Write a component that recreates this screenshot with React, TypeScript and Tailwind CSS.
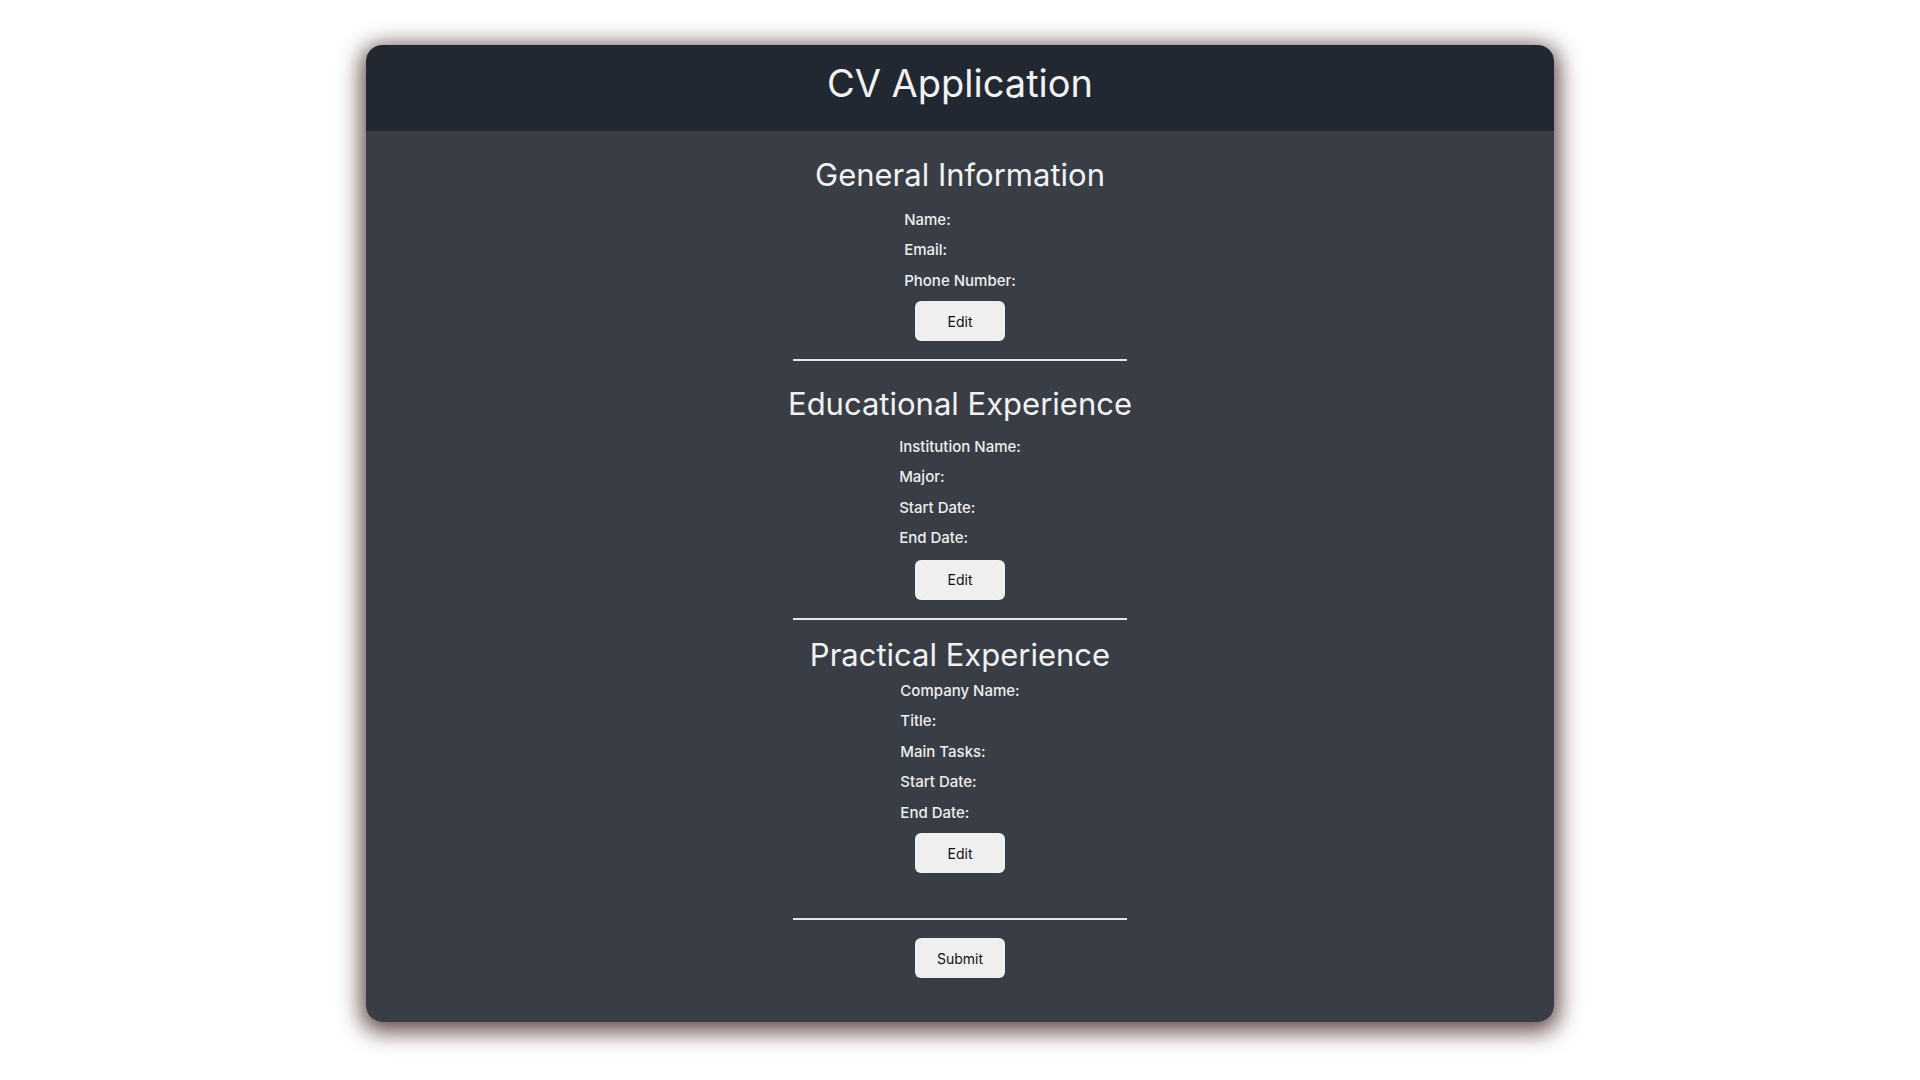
import React from "react";

type Field = { label: string };

const general: Field[] = [{ label: "Name:" }, { label: "Email:" }, { label: "Phone Number:" }];
const education: Field[] = [
  { label: "Institution Name:" },
  { label: "Major:" },
  { label: "Start Date:" },
  { label: "End Date:" },
];
const practical: Field[] = [
  { label: "Company Name:" },
  { label: "Title:" },
  { label: "Main Tasks:" },
  { label: "Start Date:" },
  { label: "End Date:" },
];

function FieldList({ fields }: { fields: Field[] }) {
  return (
    <div className="flex flex-col items-start w-fit">
      {fields.map((f) => (
        <p key={f.label} className="text-[15px] leading-[30.5px] font-medium text-[#eeeeee]">
          {f.label}
        </p>
      ))}
    </div>
  );
}

function Btn({ children, className = "" }: { children: React.ReactNode; className?: string }) {
  return (
    <button
      type="button"
      className={
        "w-[90px] h-[40px] rounded-md bg-[#efefef] text-[14px] text-[#111111] flex items-center justify-center " +
        className
      }
    >
      {children}
    </button>
  );
}

function Rule({ className = "" }: { className?: string }) {
  return <div className={"w-full h-[2px] bg-[#e6e6e6] " + className} />;
}

export default function App() {
  return (
    <div className="min-h-screen bg-white pt-[45px] font-['Inter',sans-serif]">
      <div className="mx-auto w-[1188px] rounded-2xl overflow-hidden shadow-[0_5px_22px_5px_rgba(85,55,55,0.9)]">
        <header className="h-[86px] bg-[#222831] flex justify-center pt-[16px]">
          <h1 className="text-[38px] leading-[44px] font-normal text-[#f2f2f2]">CV Application</h1>
        </header>

        <main className="bg-[#393e46] flex flex-col items-center pt-[25.5px] pb-[44px]">
          <div className="w-[334px] flex flex-col items-center">
            <h2 className="text-[31px] leading-[36px] text-[#f2f2f2] whitespace-nowrap">General Information</h2>
            <div className="mt-[12px]">
              <FieldList fields={general} />
            </div>
            <Btn className="mt-[5px]">Edit</Btn>
            <Rule className="mt-[18px]" />

            <h2 className="mt-[24.5px] text-[31px] leading-[36px] text-[#f2f2f2] whitespace-nowrap">
              Educational Experience
            </h2>
            <div className="mt-[10px]">
              <FieldList fields={education} />
            </div>
            <Btn className="mt-[6px]">Edit</Btn>
            <Rule className="mt-[18px]" />

            <h2 className="mt-[17px] text-[31px] leading-[36px] text-[#f2f2f2] whitespace-nowrap">
              Practical Experience
            </h2>
            <div className="mt-[3px]">
              <FieldList fields={practical} />
            </div>
            <Btn className="mt-[5px]">Edit</Btn>
            <Rule className="mt-[45px]" />

            <Btn className="mt-[18px]">Submit</Btn>
          </div>
        </main>
      </div>
    </div>
  );
}
